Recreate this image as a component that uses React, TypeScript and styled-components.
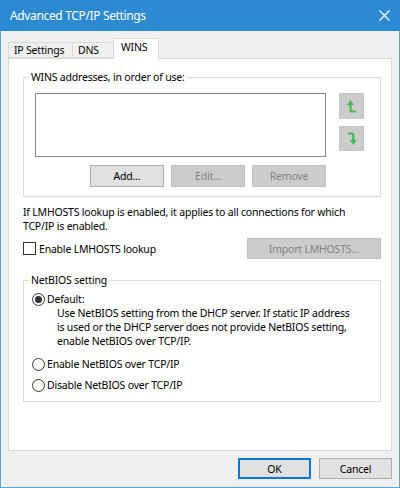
import React from 'react';
import styled, { createGlobalStyle } from 'styled-components';

const Global = createGlobalStyle`
  html, body { margin: 0; padding: 0; background: #f0f0f0; }
  * { box-sizing: border-box; }
`;

const FONT = `"Noto Sans", "Open Sans", sans-serif`;

const Window = styled.div`
  width: 400px;
  height: 488px;
  display: flex;
  flex-direction: column;
  background: #f0f0f0;
  border: 1px solid #5aa3dc;
  border-top: none;
  font-family: ${FONT};
  font-size: 10.5px;
  letter-spacing: -0.2px;
  color: #000;
`;

const TitleBar = styled.div`
  height: 31px;
  flex: none;
  margin: 0 -1px;
  background: #2b8ad2;
  color: #fff;
  display: flex;
  align-items: center;
  justify-content: space-between;
  padding: 0 10px 0 10px;
  font-size: 12px;
  letter-spacing: -0.35px;
`;

const CloseIcon = () => (
  <svg width="11" height="11" viewBox="0 0 11 11">
    <path d="M0.5 0.5 L10.5 10.5 M10.5 0.5 L0.5 10.5" stroke="#fff" strokeWidth="1.2" />
  </svg>
);

const Body = styled.div`
  flex: 1;
  display: flex;
  flex-direction: column;
  padding: 7px 7px 0 7px;
`;

const TabStrip = styled.div`
  height: 20px;
  display: flex;
  align-items: flex-end;
  position: relative;
  z-index: 1;
`;

const Tab = styled.div<{ $w: number; $active?: boolean }>`
  width: ${(p) => p.$w}px;
  height: ${(p) => (p.$active ? 21 : 16)}px;
  margin-bottom: ${(p) => (p.$active ? -1 : 0)}px;
  margin-right: -1px;
  border: 1px solid #d9d9d9;
  border-bottom: ${(p) => (p.$active ? 'none' : '1px solid #d9d9d9')};
  background: ${(p) => (p.$active ? '#fff' : '#f0f0f0')};
  padding-left: ${(p) => (p.$active ? 7 : 5)}px;
  line-height: ${(p) => (p.$active ? 17 : 15)}px;
  white-space: nowrap;
`;

const Panel = styled.div`
  height: 393px;
  background: #fff;
  border: 1px solid #d9d9d9;
  padding: 10px 10px 0 14px;
  display: flex;
  flex-direction: column;
`;

const Group = styled.fieldset<{ $mt?: number }>`
  margin: ${(p) => p.$mt ?? 0}px 0 0 0;
  padding: 0;
  border: 1px solid #dcdcdc;
  min-width: 0;
`;

const Caption = styled.legend`
  margin-left: 5px;
  padding: 0 2px;
  line-height: 16px;
`;

const GroupBody = styled.div<{ $pad: string }>`
  padding: ${(p) => p.$pad};
`;

const Row = styled.div`
  display: flex;
`;

const Column = styled.div<{ $ml?: number }>`
  display: flex;
  flex-direction: column;
  margin-left: ${(p) => p.$ml ?? 0}px;
`;

const ListBox = styled.div`
  width: 291px;
  height: 64px;
  border: 1px solid #828790;
  background: #fff;
`;

const ButtonRow = styled.div<{ $mt?: number; $gap: number }>`
  display: flex;
  justify-content: flex-end;
  gap: ${(p) => p.$gap}px;
  margin-top: ${(p) => p.$mt ?? 0}px;
`;

const Button = styled.div<{ $w: number; $h: number; $disabled?: boolean; $default?: boolean }>`
  width: ${(p) => p.$w}px;
  height: ${(p) => p.$h}px;
  display: flex;
  align-items: center;
  justify-content: center;
  background: ${(p) => (p.$disabled ? '#cccccc' : '#e1e1e1')};
  border: ${(p) => (p.$default ? '2px solid #0078d7' : p.$disabled ? '1px solid #bfbfbf' : '1px solid #adadad')};
  color: ${(p) => (p.$disabled ? '#838383' : '#000')};
  white-space: nowrap;
`;

const ArrowButton = styled.div<{ $h: number; $mt?: number }>`
  width: 25px;
  height: ${(p) => p.$h}px;
  margin-top: ${(p) => p.$mt ?? 0}px;
  background: #cccccc;
  border: 1px solid #c4c4c4;
  display: flex;
  align-items: center;
  justify-content: center;
`;

const UpIcon = () => (
  <svg width="10" height="15" viewBox="0 0 10 15">
    <path d="M3.5 3 V11 Q3.5 12.5 5 12.5 H9" stroke="#45b955" strokeWidth="2.2" fill="none" />
    <path d="M0 6 L3.5 1 L7 6 Z" fill="#45b955" />
  </svg>
);

const DownIcon = () => (
  <svg width="10" height="15" viewBox="0 0 10 15">
    <path d="M1 2.5 H4.8 Q6.3 2.5 6.3 4 V12" stroke="#45b955" strokeWidth="2.2" fill="none" />
    <path d="M2.8 9 L6.3 14 L9.8 9 Z" fill="#45b955" />
  </svg>
);

const Paragraph = styled.div`
  margin-top: 8px;
  line-height: 14px;
`;

const CheckRow = styled.div`
  margin-top: 5px;
  height: 21px;
  display: flex;
  align-items: center;
  justify-content: space-between;
`;

const CheckLabel = styled.label`
  display: flex;
  align-items: center;
  gap: 3px;
`;

const CheckBox = styled.span`
  width: 13px;
  height: 13px;
  border: 1px solid #333;
  background: #fff;
  display: inline-block;
`;

const RadioRow = styled.div<{ $mt?: number }>`
  display: flex;
  align-items: center;
  gap: 2px;
  height: 14px;
  margin-top: ${(p) => p.$mt ?? 0}px;
`;

const Radio = styled.span<{ $checked?: boolean }>`
  width: 13px;
  height: 13px;
  border-radius: 50%;
  border: 1px solid #333;
  background: #fff;
  display: flex;
  align-items: center;
  justify-content: center;
  &::after {
    content: '';
    width: 7px;
    height: 7px;
    border-radius: 50%;
    background: #333;
    display: ${(p) => (p.$checked ? 'block' : 'none')};
  }
`;

const Description = styled.div`
  padding-left: 25px;
  line-height: 14px;
`;

const Footer = styled.div`
  display: flex;
  justify-content: flex-end;
  gap: 8px;
  padding-top: 7px;
`;

export default function App() {
  return (
    <>
      <Global />
      <Window>
        <TitleBar>
          <span>Advanced TCP/IP Settings</span>
          <CloseIcon />
        </TitleBar>
        <Body>
          <TabStrip>
            <Tab $w={65}>IP Settings</Tab>
            <Tab $w={42}>DNS</Tab>
            <Tab $w={46} $active>WINS</Tab>
          </TabStrip>
          <Panel>
            <Group>
              <Caption>WINS addresses, in order of use:</Caption>
              <GroupBody $pad="8px 15px 9px 11px">
                <Row>
                  <Column>
                    <ListBox />
                    <ButtonRow $mt={8} $gap={7}>
                      <Button $w={74} $h={22}>Add...</Button>
                      <Button $w={74} $h={22} $disabled>Edit...</Button>
                      <Button $w={74} $h={22} $disabled>Remove</Button>
                    </ButtonRow>
                  </Column>
                  <Column $ml={13}>
                    <ArrowButton $h={26}><UpIcon /></ArrowButton>
                    <ArrowButton $h={25} $mt={7}><DownIcon /></ArrowButton>
                  </Column>
                </Row>
              </GroupBody>
            </Group>
            <Paragraph>
              If LMHOSTS lookup is enabled, it applies to all connections for which
              <br />
              TCP/IP is enabled.
            </Paragraph>
            <CheckRow>
              <CheckLabel>
                <CheckBox />
                Enable LMHOSTS lookup
              </CheckLabel>
              <Button $w={134} $h={21} $disabled>Import LMHOSTS...</Button>
            </CheckRow>
            <Group $mt={13}>
              <Caption>NetBIOS setting</Caption>
              <GroupBody $pad="4px 10px 9px 8px">
                <RadioRow>
                  <Radio $checked />
                  Default:
                </RadioRow>
                <Description>
                  Use NetBIOS setting from the DHCP server. If static IP address
                  <br />
                  is used or the DHCP server does not provide NetBIOS setting,
                  <br />
                  enable NetBIOS over TCP/IP.
                </Description>
                <RadioRow $mt={9}>
                  <Radio />
                  Enable NetBIOS over TCP/IP
                </RadioRow>
                <RadioRow $mt={7}>
                  <Radio />
                  Disable NetBIOS over TCP/IP
                </RadioRow>
              </GroupBody>
            </Group>
          </Panel>
          <Footer>
            <Button $w={73} $h={21} $default>OK</Button>
            <Button $w={73} $h={21}>Cancel</Button>
          </Footer>
        </Body>
      </Window>
    </>
  );
}
